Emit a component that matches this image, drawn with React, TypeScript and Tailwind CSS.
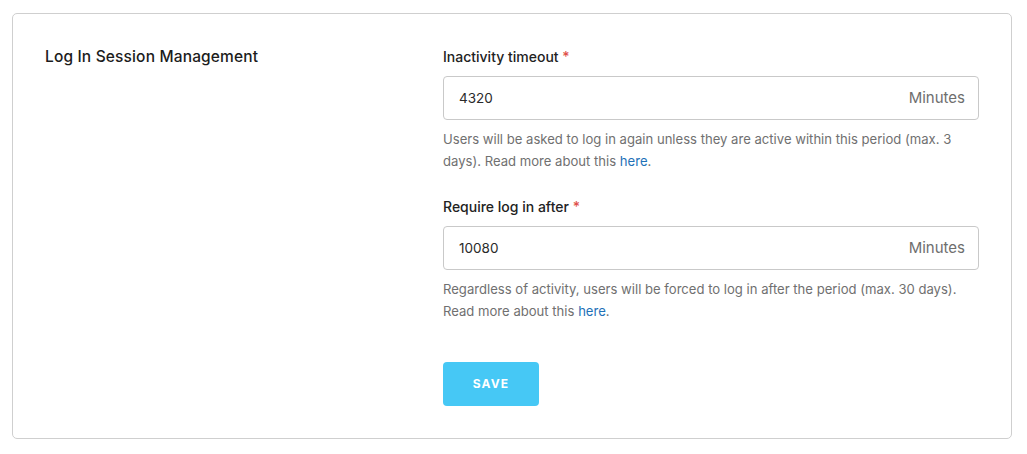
export default function App() {
  return (
    <div className="bg-white w-[1027px] h-[454px] pt-[13px] pl-[12px] font-['Inter',sans-serif]">
      <div className="w-[1000px] border border-[#cfcfcf] rounded-[5px] p-8 flex">
        <div className="w-[398px] shrink-0">
          <h2 className="text-[15.5px] leading-[22px] font-medium text-[#1c1c1c] tracking-[0.01em]">
            Log In Session Management
          </h2>
        </div>
        <div className="flex-1 flex flex-col">
          <Field
            label="Inactivity timeout"
            value="4320"
            help="Users will be asked to log in again unless they are active within this period (max. 3 days). Read more about this "
          />
          <div className="h-6" />
          <Field
            label="Require log in after"
            value="10080"
            help="Regardless of activity, users will be forced to log in after the period (max. 30 days). Read more about this "
          />
          <button className="mt-10 w-[96px] h-[44px] rounded-[4px] bg-[#46c8f5] text-white text-[12px] font-bold tracking-[0.1em]">
            SAVE
          </button>
        </div>
      </div>
    </div>
  );
}

function Field({ label, value, help }: { label: string; value: string; help: string }) {
  return (
    <div>
      <label className="block text-[14px] leading-[22px] font-medium text-[#222]">
        {label} <span className="text-[#e0504a]">*</span>
      </label>
      <div className="mt-2 h-[44px] border border-[#c9c9c9] rounded-[4px] flex items-center justify-between pl-[15px] pr-[13px]">
        <span className="text-[13.5px] text-[#2a2a2a]">{value}</span>
        <span className="text-[15px] text-[#6e6e6e]">Minutes</span>
      </div>
      <p className="mt-2 text-[13.1px] leading-[22px] text-[#707070] pr-2">
        {help}
        <a className="text-[#1f72b8]">here</a>.
      </p>
    </div>
  );
}
